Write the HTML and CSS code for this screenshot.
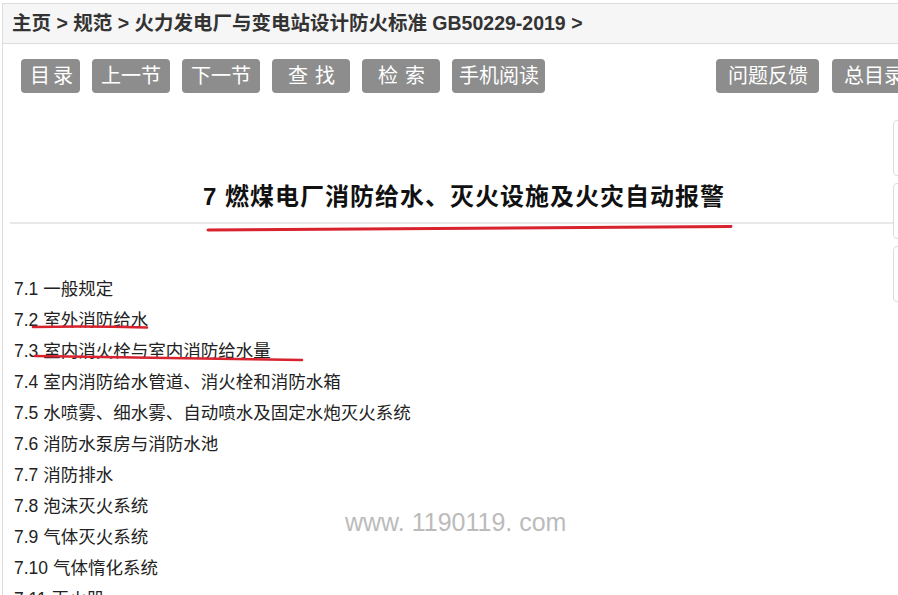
FILE: index.html
```html
<!DOCTYPE html>
<html lang="zh-CN">
<head>
    <meta charset="UTF-8">
    <meta name="viewport" content="width=device-width, initial-scale=1.0">
    <title>火力发电厂与变电站设计防火标准 GB50229-2019</title>
    <link rel="stylesheet" href="styles.css">
</head>
<body>
    <div class="page">
        <!-- 面包屑 -->
        <div class="crumbs">主页 &gt; 规范 &gt; 火力发电厂与变电站设计防火标准 GB50229-2019 &gt;</div>

        <!-- 工具栏 -->
        <div class="toolbar">
            <a class="btn btn-short">目录</a>
            <a class="btn">上一节</a>
            <a class="btn">下一节</a>
            <a class="btn btn-wide">查找</a>
            <a class="btn btn-wide">检索</a>
            <a class="btn btn-tight">手机阅读</a>
            <div class="toolbar-right">
                <a class="btn btn-loose">问题反馈</a>
                <a class="btn btn-loose">总目录</a>
            </div>
        </div>

        <h1 class="title">7 燃煤电厂消防给水、灭火设施及火灾自动报警</h1>

        <ul class="toc">
            <li>7.1 一般规定</li>
            <li>7.2 室外消防给水</li>
            <li>7.3 室内消火栓与室内消防给水量</li>
            <li>7.4 室内消防给水管道、消火栓和消防水箱</li>
            <li>7.5 水喷雾、细水雾、自动喷水及固定水炮灭火系统</li>
            <li>7.6 消防水泵房与消防水池</li>
            <li>7.7 消防排水</li>
            <li>7.8 泡沫灭火系统</li>
            <li>7.9 气体灭火系统</li>
            <li>7.10 气体惰化系统</li>
            <li>7.11 灭火器</li>
            <li>7.12 消防车</li>
        </ul>
    </div>

    <!-- 右侧浮动栏 -->
    <div class="side">
        <div class="side-box"></div>
        <div class="side-box"></div>
        <div class="side-box"></div>
    </div>

    <div class="watermark">www. 1190119. com</div>

    <!-- 红色标注线 -->
    <svg class="marks" width="898" height="595" viewBox="0 0 898 595">
        <path d="M208 230 Q470 228 731 226.5" stroke="#d8232e" stroke-width="3" fill="none" stroke-linecap="round"/>
        <path d="M33 327 Q90 326 147 327.5" stroke="#d8232e" stroke-width="2.5" fill="none" stroke-linecap="round"/>
        <path d="M35 356 Q170 358 302 360" stroke="#d8232e" stroke-width="2.5" fill="none" stroke-linecap="round"/>
    </svg>
</body>
</html>
```

FILE: styles.css
```css
html, body {
    overflow: hidden;
}
body {
    margin: 0;
    font-family: "Liberation Sans", "Noto Sans CJK SC", sans-serif;
    color: #222;
    background: #fff;
}
.page {
    width: 930px;
    margin: 3px 0 0 2px;
    border-top: 1px solid #dcdcdc;
    border-left: 1px solid #dcdcdc;
    box-sizing: border-box;
    min-height: 700px;
}
.crumbs {
    height: 39px;
    line-height: 39px;
    padding-left: 9px;
    background: #f6f6f6;
    border-bottom: 1px solid #dcdcdc;
    font-size: 19.5px;
    font-weight: bold;
    color: #333;
    white-space: nowrap;
}
.toolbar {
    display: flex;
    gap: 12px;
    padding: 15px 17px 0 18px;
}
.toolbar-right {
    display: flex;
    gap: 13px;
    margin-left: auto;
}
.btn {
    display: block;
    height: 34px;
    line-height: 34px;
    padding: 0 9px;
    background: #8d8d8d;
    color: #fff;
    font-size: 20px;
    border-radius: 4px;
    white-space: nowrap;
    cursor: pointer;
}
.btn-short {
    padding: 0 7px 0 9px;
    letter-spacing: 3px;
    width: 59px;
    box-sizing: border-box;
}
.btn-wide {
    width: 78px;
    box-sizing: border-box;
    padding: 0 0 0 16px;
    letter-spacing: 7px;
}
.btn-tight {
    padding: 0 6px 0 7px;
}
.btn-loose {
    padding: 0 11px 0 12px;
}
.title {
    margin: 87px 0 0 7px;
    padding: 0 14px 8px 0;
    border-bottom: 2px solid #e8e8e8;
    text-align: center;
    font-size: 24px;
    line-height: 34px;
    letter-spacing: 1px;
    font-weight: bold;
    color: #111;
}
.toc {
    list-style: none;
    margin: 50px 0 0;
    padding: 0 0 0 11px;
    font-size: 17.5px;
    line-height: 31px;
    color: #222;
}
.side {
    position: fixed;
    top: 120px;
    left: 893px;
    display: flex;
    flex-direction: column;
    gap: 7px;
}
.side-box {
    width: 40px;
    height: 56px;
    background: #fff;
    border: 1px solid #dcdcdc;
    border-radius: 4px;
    box-sizing: border-box;
}
.watermark {
    position: absolute;
    left: 345px;
    top: 508px;
    font-family: "Liberation Sans", sans-serif;
    font-size: 25px;
    color: #bbbbbb;
    white-space: nowrap;
}
.marks {
    position: absolute;
    left: 0;
    top: 0;
    pointer-events: none;
}
```
